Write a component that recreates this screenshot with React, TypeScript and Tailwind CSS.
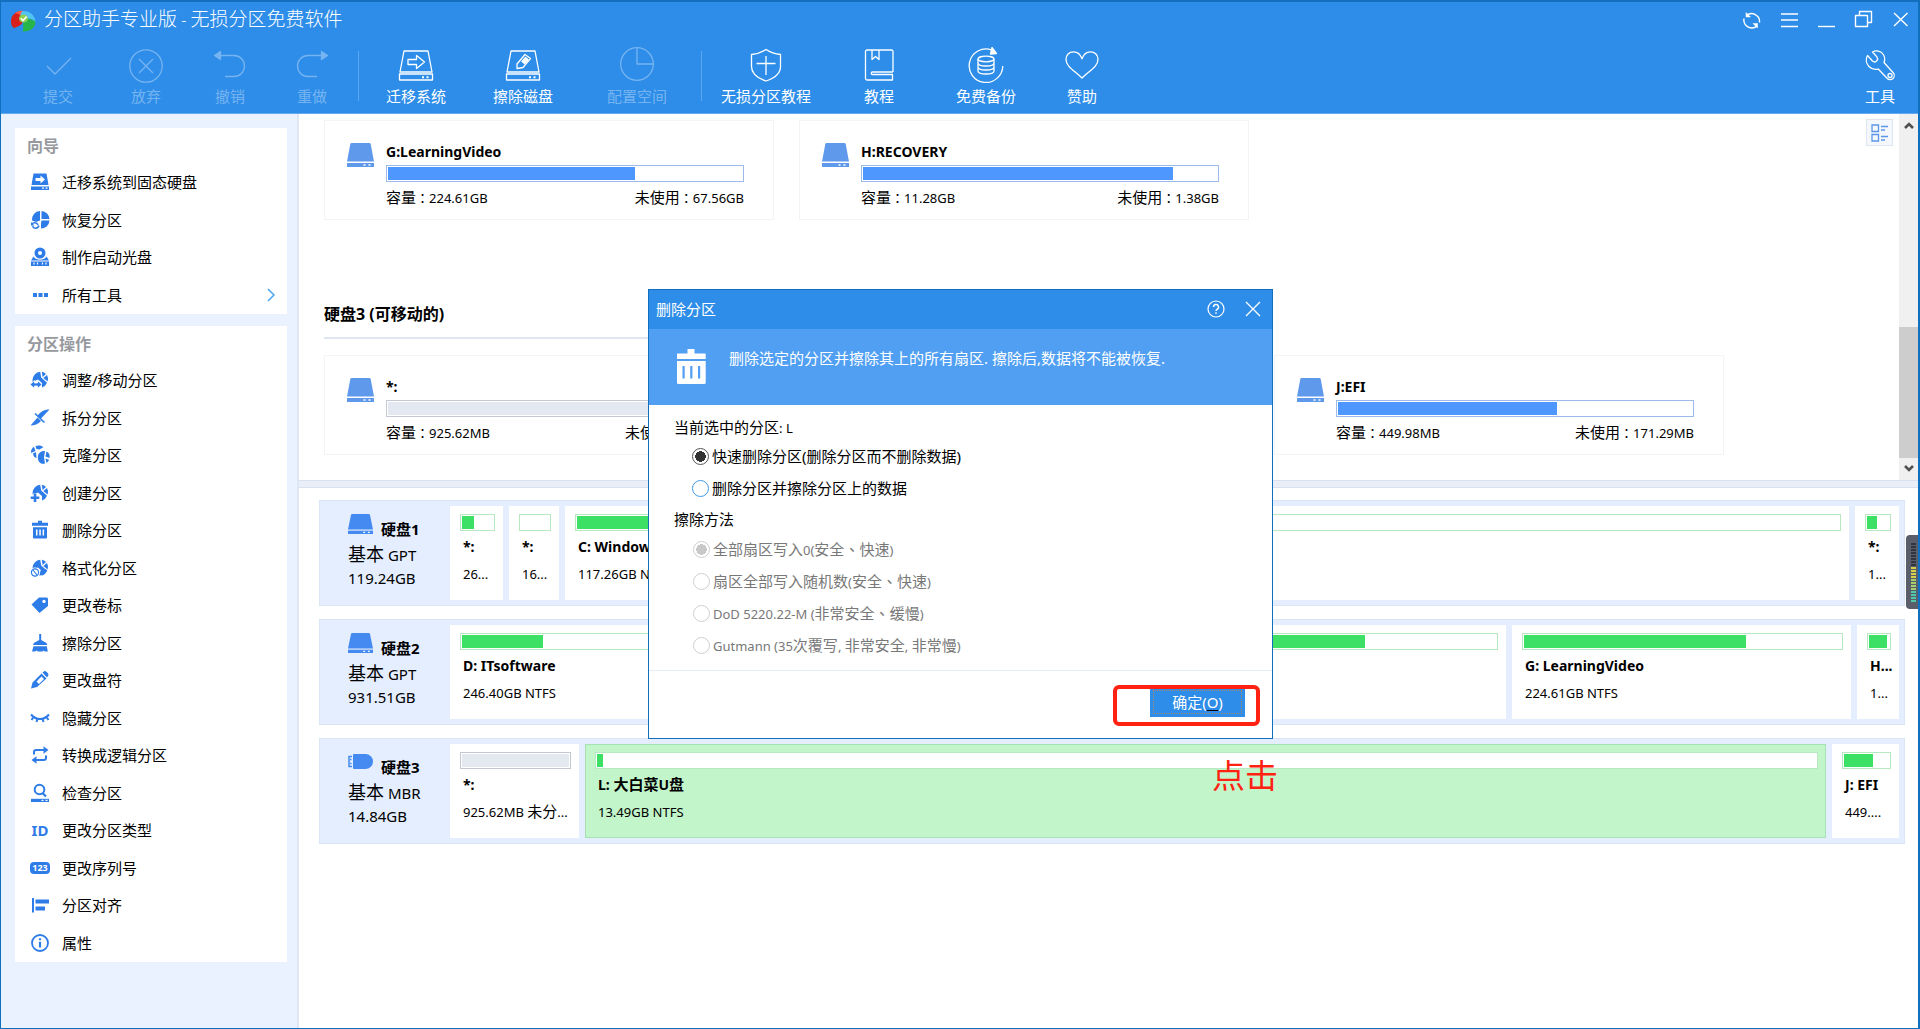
import React from "react";

const LATIN = /([\x20-\x7e…]+|[：、]+)/;

/* Chinese runs keep the parent size; Latin runs are set one step smaller. */
function Mixed({ text, latin = "text-[13px]" }: { text: string; latin?: string }) {
  return (
    <>
      {text.split(LATIN).map((part, i) => {
        if (!part) return null;
        if (/^[：、]/.test(part))
          return (
            <span key={i} className={`font-['Noto_Sans_CJK_TC',sans-serif] ${part === "、" ? "text-[15px]" : "text-[13px]"}`}>
              {part}
            </span>
          );
        if (LATIN.test(part))
          return (
            <span key={i} className={latin}>
              {part}
            </span>
          );
        return <React.Fragment key={i}>{part}</React.Fragment>;
      })}
    </>
  );
}

function Line({ children, size = 36, w = 1.3 }: { children: React.ReactNode; size?: number; w?: number }) {
  return (
    <svg
      width={size}
      height={size}
      viewBox={`0 0 ${size} ${size}`}
      fill="none"
      stroke="currentColor"
      strokeWidth={w}
      strokeLinejoin="round"
      aria-hidden="true"
    >
      {children}
    </svg>
  );
}

/* ---------- toolbar ---------- */

const toolIcons: Record<string, React.ReactNode> = {
  commit: <path d="M7 19l8 8L31 11" />,
  discard: (
    <>
      <circle cx="18" cy="19" r="16.2" />
      <path d="M11 12l14 14M25 12L11 26" />
    </>
  ),
  undo: (
    <>
      <path d="M8 8.500h14a10.500 10.500 0 0 1 0 21h-9" />
      <path d="M2.500 8.500l6-4v8z" fill="currentColor" />
    </>
  ),
  redo: (
    <>
      <path d="M28 8.500H14a10.500 10.500 0 0 0 0 21h9" />
      <path d="M33.500 8.500l-6-4v8z" fill="currentColor" />
    </>
  ),
  migrate: (
    <>
      <path d="M6 4h24l4 21H2z" />
      <path d="M1.500 27h33v6h-33z" />
      <path d="M24 30.200h2M28.500 30.200h2" strokeWidth="2" />
      <path d="M10 12.500h8.500V8.500l8 6.500-8 6.500v-4H10z" />
    </>
  ),
  wipe: (
    <>
      <path d="M6 4h24l4 21H2z" />
      <path d="M1.500 27h33v6h-33z" />
      <path d="M24 30.200h2M28.500 30.200h2" strokeWidth="2" />
      <path d="M12 17l8-9.500 5.500 4-7.500 9-6 1z" />
      <path d="M17 14.500l3.500-4 2.500 2-3.500 4z" fill="currentColor" />
    </>
  ),
  space: (
    <>
      <circle cx="18" cy="17" r="16.300" />
      <path d="M18 1v16h16" />
    </>
  ),
  shield: (
    <>
      <path d="M18 2.500c4.500 3 9 4.500 14.500 5v12c0 7-7 12-14.500 14.500C10.500 31.500 3.500 26.500 3.500 19.500v-12C9 7 13.500 5.500 18 2.500z" />
      <path d="M18 9v19M8.500 16.500h19" />
    </>
  ),
  book: (
    <>
      <path d="M32 25H11.500M32 25V4.500a1.500 1.500 0 0 0-1.500-1.500H6a1.500 1.500 0 0 0-1.500 1.500v27A1.500 1.500 0 0 0 6 33h25.500v-5.500H11.500a1.200 1.200 0 0 1 0-2.500" />
      <path d="M11 3v9.500l3.500-3 3.500 3V3" />
    </>
  ),
  backup: (
    <>
      <path d="M23.500 2.800A16.800 16.800 0 1 0 34.800 19" />
      <path d="M24 0.500l4.500 6-6 .500z" fill="currentColor" />
      <ellipse cx="18" cy="12" rx="8" ry="2.800" />
      <path d="M10 12v12c0 4 16 4 16 0V12M10 16c0 4 16 4 16 0M10 20c0 4 16 4 16 0" />
    </>
  ),
  heart: (
    <path d="M18 31C12 24.500 2 20 2 12.500 2 8 5 4.800 9.500 4.800c4 0 7 2.500 8.500 7 1.500-4.500 4.500-7 8.500-7C31 4.800 34 8 34 12.500 34 20 24 24.500 18 31z" />
  ),
  wrench: (
    <>
      <path d="M10.500 5c3.500-2 8.500-1 10.800 2.500 1.800 2.700 1.700 5.500.700 8l9.200 10.200c1.500 1.700 1.300 4.300-.200 5.800s-4.200 1.600-5.700 0L16.200 22c-3.200 1-6.800 0-9.200-2.500-3-3-3.500-7.500-1.500-11l5 5.500c1.500 1.200 3.300 1 4.300-.200s1-2.800 0-4z" />
      <circle cx="28" cy="28.500" r="2" />
    </>
  ),
};

type Tool = { icon: string; label: string; width: string; off?: boolean };
const toolGroups: Tool[][] = [
  [
    { icon: "commit", label: "提交", width: "w-[88px]", off: true },
    { icon: "discard", label: "放弃", width: "w-[88px]", off: true },
    { icon: "undo", label: "撤销", width: "w-20", off: true },
    { icon: "redo", label: "重做", width: "w-[84px]", off: true },
  ],
  [
    { icon: "migrate", label: "迁移系统", width: "w-[106px]" },
    { icon: "wipe", label: "擦除磁盘", width: "w-[108px]" },
    { icon: "space", label: "配置空间", width: "w-[120px]", off: true },
  ],
  [
    { icon: "shield", label: "无损分区教程", width: "w-[120px]" },
    { icon: "book", label: "教程", width: "w-[106px]" },
    { icon: "backup", label: "免费备份", width: "w-[108px]" },
    { icon: "heart", label: "赞助", width: "w-[84px]" },
  ],
];

function ToolButton({ icon, label, width, off }: Tool) {
  return (
    <button
      type="button"
      disabled={off}
      className={`flex flex-col items-center gap-[3px] text-[15px] leading-5 whitespace-nowrap ${width} ${
        off ? "text-[#76b4f1]" : "text-white"
      }`}
    >
      <Line>{toolIcons[icon]}</Line>
      {label}
    </button>
  );
}

function Header() {
  return (
    <header className="h-[114px] shrink-0 border-t-2 border-b border-t-[#1470bf] border-b-[#62abf0] bg-[#2d8de8] text-white">
      <div className="flex h-9 items-start">
        <svg width="26" height="22" viewBox="0 0 26 22" className="mt-2 ml-[9px] shrink-0" aria-hidden="true">
          <path d="M13 1C5 1 1 5.500 1 11c0 3.500 1 6 3 7 3-1 6-2 8.500-5L9 8z" fill="#d9211c" />
          <path d="M13 1c-3-.500-6 .500-8 2.500C8 3 10 4.500 12 7z" fill="#ff5a45" />
          <path d="M13 1c7 0 12 4 12.500 11-3-3-6-4-9.500-3.500L10.500 6C10.500 3.500 11 2 13 1z" fill="#52c3f5" />
          <path d="M25.500 12c-.500 6-5.500 10-13 9.500 1-2.500 1-5 .500-7.500l3.500-5c4-.500 7 .500 9 3z" fill="#27b54a" />
          <ellipse cx="13.500" cy="8.500" rx="4.500" ry="4" fill="#8ed14f" />
          <path d="M10.800 8.300l2.200 2.200 3.600-4" stroke="#fff" strokeWidth="1.600" fill="none" />
        </svg>
        <h1 className="ml-2 flex-1 text-[19px] leading-[34px] font-light">
          <Mixed text="分区助手专业版 - 无损分区免费软件" latin="text-base" />
        </h1>
        <div className="flex">
          {[
            [
              "刷新",
              <>
                <path d="M17.500 13.500a8 8 0 0 0-13-7M2 9.500a8 8 0 0 0 13 7.500" transform="translate(0 -1)" />
                <path d="M4 2.500v4.500h4.500zM15.500 18v-4.500H11z" fill="currentColor" strokeWidth="0.500" />
              </>,
            ],
            ["菜单", <path d="M2 4h17M2 10h17M2 16.500h17" />],
            ["最小化", <path d="M2 16.500h17" />],
            ["还原", <path d="M2.500 5.500h12v11h-12zM6.500 5.500v-4h12v11h-4" />],
            ["关闭", <path d="M4 3l13.500 13M17.500 3L4 16" />],
          ].map(([name, icon]) => (
            <button key={name as string} type="button" aria-label={name as string} className="flex h-9 w-[37px] justify-center pt-2">
              <Line size={20} w={1.4}>
                {icon}
              </Line>
            </button>
          ))}
        </div>
      </div>
      <div className="flex items-start pt-[9px] pl-[13px]">
        {toolGroups.map((group, g) => (
          <React.Fragment key={g}>
            {g > 0 && <span className="mx-1 mt-1 h-[50px] w-px bg-[#5ca8ee]" />}
            {group.map((t) => (
              <ToolButton key={t.label} {...t} />
            ))}
          </React.Fragment>
        ))}
        <span className="flex-1" />
        <ToolButton icon="wrench" label="工具" width="w-[76px]" />
      </div>
    </header>
  );
}

/* ---------- sidebar ---------- */

const globe = (
  <>
    <path d="M2.500 10A8.300 8.300 0 0 1 10.200 1.800l1 5.700 5.800 5.200A8.300 8.300 0 0 1 12 17.500V13L8 9.500 2.500 12z" fill="currentColor" />
    <path d="M11.800 1.800a8.300 8.300 0 0 1 4.200 2.100l-3.400 3z" fill="currentColor" />
    <path d="M17 5a8 8 0 0 1 .700 6.500L13.300 8z" fill="currentColor" />
  </>
);

const sideIcons: Record<string, React.ReactNode> = {
  migrate: (
    <>
      <path d="M3.500 1.500h13l2 11.500h-17z" fill="currentColor" />
      <path d="M1 14.500h18v3.500H1z" fill="currentColor" />
      <path d="M5.500 6h5V3.500l4.500 4-4.500 4V9h-5z" fill="#fff" />
      <path d="M12 16.200h2M15.500 16.200h2" stroke="#fff" strokeWidth="1.300" />
    </>
  ),
  recover: (
    <>
      <path d="M10 1v9.500l-4 1.500-4-1.500A8.500 8.500 0 0 1 10 1z" fill="currentColor" />
      <path d="M11.500 1A8.500 8.500 0 0 1 19.500 9h-8z" fill="currentColor" />
      <path d="M11.500 10.500h8a8.500 8.500 0 0 1-8.500 8v-5z" fill="currentColor" />
      <path d="M1.500 14.500c1.500-2.500 5.500-2.500 6.500.500M9 15.500c-1 3.500-5.500 3.500-6.500.800" stroke="currentColor" strokeWidth="1.600" fill="none" />
      <path d="M1 12v3.500h3.500z" fill="currentColor" />
    </>
  ),
  bootdisc: (
    <>
      <path d="M10 0.500a5.500 5.500 0 1 1 0 11 5.500 5.500 0 0 1 0-11zm0 3.500a2 2 0 1 0 0 4 2 2 0 0 0 0-4z" fill="currentColor" fillRule="evenodd" />
      <path d="M3.500 9.500c2.500 4.300 10.500 4.300 13 0l2.500 4H1z" fill="currentColor" />
      <path d="M1 14.500h18V19H1z" fill="currentColor" />
      <path d="M4 15.500v2M7.500 15.500v2M12.500 15.500v2M16 15.500v2" stroke="#fff" strokeWidth="1.200" />
    </>
  ),
  dots: <path d="M3 8h4v4H3zM8.500 8h4v4h-4zM14 8h4v4h-4z" fill="currentColor" />,
  resize: (
    <>
      {globe}
      <path d="M0 14.500l4.500-4v2.500h3v-2.500l4.500 4-4.500 4V16h-3v2.500z" fill="currentColor" stroke="#fff" strokeWidth="0.800" />
    </>
  ),
  split: (
    <>
      <path d="M19.500 1.500l-9 9.500-3-3C10 4 14 1.500 19.500 1.500zM7.500 9.500l3.500 3.500C8.500 16 4 17.500.500 17.500z" fill="currentColor" />
      <path d="M5 5.500l9.500 9" stroke="currentColor" strokeWidth="1.600" />
    </>
  ),
  clone: (
    <>
      <path d="M1 7c0-2 1-4 3-5.200L5.500 6 1.200 8zM5.500 1c3-1 6-.500 8 1l-4 2.500-3-.500zM3 8.500l3-1.500.500 6C4.500 12.500 3.200 11 3 8.500z" fill="currentColor" />
      <path d="M8 10.500C9 7 12 5.500 15 6l-1 6.500 1 6C10.500 20 7 16 8 10.500zM16.500 6.500c2.500 1 3.500 3.500 3 6.500l-4-1.500zM15.500 13.500l3.500 1.300c-.500 1.500-1.500 2.500-2.500 3.200z" fill="currentColor" />
    </>
  ),
  create: (
    <>
      {globe}
      <path d="M5 10.500v8.500M.700 14.800h8.600" stroke="#fff" strokeWidth="5" />
      <path d="M5 10.500v8.500M.700 14.800h8.600" stroke="currentColor" strokeWidth="2.600" />
    </>
  ),
  trash: (
    <path
      d="M8 0.800h4v2h6v3H2v-3h6zM3 7.200h14V17.500a1 1 0 0 1-1 1H4a1 1 0 0 1-1-1zM6 9.500v6h1.500v-6zM9.300 9.500v6h1.500v-6zM12.600 9.500v6h1.500v-6z"
      fill="currentColor"
      fillRule="evenodd"
    />
  ),
  format: (
    <>
      <path d="M11.500 10l-2.500 7.500a8.500 8.500 0 0 0 8.300-5.500z" fill="currentColor" />
      {globe}
      <circle cx="5" cy="14.500" r="5" fill="#fff" />
      <circle cx="5" cy="14.500" r="3.600" fill="none" stroke="currentColor" strokeWidth="1.200" />
      <path d="M3 12l4 5" stroke="currentColor" strokeWidth="1.200" />
    </>
  ),
  tag: (
    <path
      d="M9 2.500h7.500a1.500 1.500 0 0 1 1.500 1.500v7L9.500 18 1.500 9.500zM14 4.700a1.700 1.700 0 1 0 0 3.400 1.700 1.700 0 0 0 0-3.400z"
      fill="currentColor"
      fillRule="evenodd"
    />
  ),
  brush: (
    <>
      <path d="M9.200 1h2v6l4.500 2.500c1.300.800 1.500 1.800 1.500 2.500h-14c0-1 .300-1.800 1.500-2.500L9.200 7z" fill="currentColor" />
      <path d="M3.500 13.200h13.300l1 5.300h-3l-1.300-1-1 1h-4.500l-1.500-1-1.500 1H2z" fill="currentColor" />
    </>
  ),
  pencil: (
    <path
      d="M12.500 2.500L14.500 1c1-.500 4.500 2.700 4 4l-1.500 2.500zM11.500 3.500L16.500 8.500 7 17 1 18.500 2.500 12.500zM11.500 6.500L6.500 11.500 9 14l5-5z"
      fill="currentColor"
      fillRule="evenodd"
    />
  ),
  hidden: (
    <path
      d="M1 6.500c5 6 13 6 18 0M3.500 9L1.500 12M16.500 9l2 3M7.500 10.800L6.500 14M12.500 10.800l1 3.200"
      stroke="currentColor"
      strokeWidth="2"
      fill="none"
    />
  ),
  convert: (
    <>
      <path d="M4 9.500V7.200c0-1.200 1-2.200 2.200-2.200H14M16 10.500v2.300c0 1.200-1 2.200-2.200 2.200H6" stroke="currentColor" strokeWidth="2" fill="none" />
      <path d="M13.500 1.200L18.500 5l-5 3.800zM6.500 11.200L1.500 15l5 3.800z" fill="currentColor" />
    </>
  ),
  check: (
    <>
      <circle cx="9.500" cy="6.500" r="4.800" fill="none" stroke="currentColor" strokeWidth="2" />
      <path d="M12.500 10l3.500 3.500" stroke="currentColor" strokeWidth="2.200" />
      <path d="M1 15.800h18V19H1z" fill="currentColor" />
      <path d="M11.500 17.400h2M15.500 17.400h2" stroke="#fff" strokeWidth="1.200" />
    </>
  ),
  align: <path d="M2 3h2v14.500H2zM5.500 4.500H19v4H5.500zM5.500 11.500h9.500v4H5.500z" fill="currentColor" />,
  info: (
    <>
      <circle cx="10" cy="10" r="8" fill="none" stroke="currentColor" strokeWidth="1.800" />
      <path d="M10 8.800v5.700M10 5.200v2" stroke="currentColor" strokeWidth="2.200" />
    </>
  ),
};

function SideIcon({ name }: { name: string }) {
  if (name === "id") return <span className="w-5 text-center text-[15px] leading-5 font-bold">ID</span>;
  if (name === "123")
    return (
      <span className="h-3 w-5 rounded-sm bg-[#2e7ce8] text-center text-[9px] leading-3 font-bold text-white">123</span>
    );
  return (
    <svg width="20" height="20" viewBox="0 0 20 20" aria-hidden="true">
      {sideIcons[name]}
    </svg>
  );
}

const wizard = [
  ["migrate", "迁移系统到固态硬盘"],
  ["recover", "恢复分区"],
  ["bootdisc", "制作启动光盘"],
  ["dots", "所有工具"],
];
const operations = [
  ["resize", "调整/移动分区"],
  ["split", "拆分分区"],
  ["clone", "克隆分区"],
  ["create", "创建分区"],
  ["trash", "删除分区"],
  ["format", "格式化分区"],
  ["tag", "更改卷标"],
  ["brush", "擦除分区"],
  ["pencil", "更改盘符"],
  ["hidden", "隐藏分区"],
  ["convert", "转换成逻辑分区"],
  ["check", "检查分区"],
  ["id", "更改分区类型"],
  ["123", "更改序列号"],
  ["align", "分区对齐"],
  ["info", "属性"],
];

function SidePanel({ title, items, height }: { title: string; items: string[][]; height: string }) {
  return (
    <section className="bg-white">
      <h2 className="h-9 pl-3 text-base leading-9 font-bold text-[#96999e]">{title}</h2>
      <ul className={`grid auto-rows-fr ${height}`}>
        {items.map(([icon, label]) => (
          <li key={label} className="flex">
            <button type="button" className="flex w-full items-center gap-3 pr-3 pb-px pl-[15px] text-[15px] text-black">
              <span className="flex w-5 items-center text-[#2e7ce8]">
                <SideIcon name={icon} />
              </span>
              <span className="flex-1 text-left">{label}</span>
              {icon === "dots" && (
                <svg width="8" height="14" viewBox="0 0 8 14" fill="none" stroke="#4aa3f0" strokeWidth="1.500" aria-hidden="true">
                  <path d="M1 1l6 6-6 6" />
                </svg>
              )}
            </button>
          </li>
        ))}
      </ul>
    </section>
  );
}

/* ---------- upper pane: partition cards ---------- */

function DriveIcon({ className }: { className: string }) {
  return (
    <svg viewBox="0 0 27 24" preserveAspectRatio="none" className={className} fill="currentColor" aria-hidden="true">
      <path d="M4.500 0h18c.600 0 1 .400 1.200 1L27 18.500H0L3.300 1c.200-.600.600-1 1.200-1z" />
      <path d="M0 20h27v4H0z" />
      <path d="M16.500 22h2M21.500 22h2" stroke="#fff" strokeWidth="1.400" />
    </svg>
  );
}

type Card = { name: string; total: string; free: string; used: number; unallocated?: boolean };

function PartitionCard({ name, total, free, used, unallocated }: Card) {
  return (
    <article className="flex h-[100px] w-[450px] gap-3 border border-[#f2f4f8] pt-5 pr-[29px] pl-[22px]">
      <DriveIcon className="mt-0.5 h-6 w-[27px] text-[#5f99eb]" />
      <div className="flex-1 text-black">
        <h3 className="h-6 text-[15px] leading-5 font-bold">
          <Mixed text={name} latin="text-[14px]" />
        </h3>
        <div className={`h-[17px] border p-px ${unallocated ? "border-[#c5c9d3]" : "border-[#9dbbe8]"}`}>
          <div className={`h-full ${unallocated ? "bg-[#e4e8f1]" : "bg-[#4d97ff]"}`} style={{ width: `${used}%` }} />
        </div>
        <p className="flex justify-between pt-[5px] text-[15px] leading-5">
          <span>
            <Mixed text={`容量：${total}`} />
          </span>
          <span>
            <Mixed text={`未使用：${free}`} />
          </span>
        </p>
      </div>
    </article>
  );
}

const upperCards: Card[] = [
  { name: "G:LearningVideo", total: "224.61GB", free: "67.56GB", used: 69.8 },
  { name: "H:RECOVERY", total: "11.28GB", free: "1.38GB", used: 87.5 },
];
const removableCards: Card[] = [
  { name: "*:", total: "925.62MB", free: "925.62MB", used: 100, unallocated: true },
  { name: "L:大白菜U盘", total: "13.49GB", free: "13.42GB", used: 1 },
  { name: "J:EFI", total: "449.98MB", free: "171.29MB", used: 61.8 },
];

function Overview() {
  return (
    <section className="flex h-[366px] shrink-0">
      <div className="flex-1 pt-1.5 pl-[25px]">
        <div className="flex gap-[25px]">
          {upperCards.map((c) => (
            <PartitionCard key={c.name} {...c} />
          ))}
        </div>
        <h2 className="mt-[82px] w-[450px] border-b-2 border-[#e0e6f0] pb-[11px] text-base leading-6 font-bold text-black">
          <Mixed text="硬盘3 (可移动的)" latin="text-base" />
        </h2>
        <div className="mt-4 flex gap-[25px]">
          {removableCards.map((c) => (
            <PartitionCard key={c.name} {...c} />
          ))}
        </div>
      </div>
      <button
        type="button"
        aria-label="视图"
        className="mt-[5px] mr-[6px] flex h-[27px] w-[27px] items-center justify-center border border-[#e0e6f0] bg-[#f4f7fc]"
      >
        <svg width="17" height="18" viewBox="0 0 17 18" fill="none" stroke="#5b96ea" strokeWidth="1.300" aria-hidden="true">
          <path d="M1 1h6.500v6.500H1zM1 10.500h6.500V17H1zM10 2.500h7M10 6h4M10 12.500h7M10 16h4" />
        </svg>
      </button>
      <div className="flex w-[19px] flex-col items-center bg-[#f0f0f0] py-2" aria-hidden="true">
        <svg width="10" height="7" viewBox="0 0 10 7" fill="none" stroke="#505050" strokeWidth="2.600">
          <path d="M1 6l4-4 4 4" />
        </svg>
        <div className="mt-auto mb-[7px] h-[131px] w-full bg-[#cdcdcd]" />
        <svg width="10" height="7" viewBox="0 0 10 7" fill="none" stroke="#505050" strokeWidth="2.600">
          <path d="M1 1l4 4 4-4" />
        </svg>
      </div>
    </section>
  );
}

/* ---------- lower pane: disk map ---------- */

type Part = {
  name: string;
  info: string;
  used: number;
  width?: string;
  grow?: number;
  kind?: "free" | "selected";
};
type Disk = { name: string; scheme: string; size: string; usb?: boolean; parts: Part[] };

const disks: Disk[] = [
  {
    name: "硬盘1",
    scheme: "基本 GPT",
    size: "119.24GB",
    parts: [
      { name: "*:", info: "26...", used: 40, width: "w-[53px]" },
      { name: "*:", info: "16...", used: 0, width: "w-[50px]" },
      { name: "C: Windows", info: "117.26GB NTFS", used: 50, grow: 1 },
      { name: "*:", info: "1...", used: 45, width: "w-[44px]" },
    ],
  },
  {
    name: "硬盘2",
    scheme: "基本 GPT",
    size: "931.51GB",
    parts: [
      { name: "D: ITsoftware", info: "246.40GB NTFS", used: 23, grow: 354 },
      { name: "E:", info: "449.22GB NTFS", used: 80, grow: 660 },
      { name: "G: LearningVideo", info: "224.61GB NTFS", used: 70, grow: 321 },
      { name: "H...", info: "1...", used: 88, width: "w-[42px]" },
    ],
  },
  {
    name: "硬盘3",
    scheme: "基本 MBR",
    size: "14.84GB",
    usb: true,
    parts: [
      { name: "*:", info: "925.62MB 未分...", used: 100, width: "w-[129px]", kind: "free" },
      { name: "L: 大白菜U盘", info: "13.49GB NTFS", used: 0.5, grow: 1, kind: "selected" },
      { name: "J: EFI", info: "449....", used: 64, width: "w-[67px]" },
    ],
  },
];

function PartitionBox({ part }: { part: Part }) {
  const selected = part.kind === "selected";
  const free = part.kind === "free";
  return (
    <div
      className={`h-[94px] border pt-[7px] pr-[7px] pl-[9px] ${part.width ? `${part.width} shrink-0` : "min-w-0 basis-0"} ${
        selected ? "border-[#a6e1b2] bg-[#c2f5c9]" : "border-white bg-white"
      }`}
      style={part.grow ? { flexGrow: part.grow } : undefined}
    >
      <div className={`h-[17px] border bg-white p-px ${free ? "border-[#c3c7cf]" : "border-[#b7e8c2]"}`}>
        <div className={`h-full ${free ? "bg-[#e4e8ef]" : "bg-[#3be065]"} ${part.used > 0 ? "min-w-1.5" : ""}`} style={{ width: `${part.used}%` }} />
      </div>
      <div className="pl-[3px] whitespace-nowrap text-black">
        <p className="mt-0.5 text-[15px] leading-[26px] font-bold">
          <Mixed text={part.name} latin="text-[14px]" />
        </p>
        <p className="text-[15px] leading-[26px]">
          <Mixed text={part.info} />
        </p>
      </div>
    </div>
  );
}

function DiskRow({ disk }: { disk: Disk }) {
  return (
    <section className="flex h-[106px] gap-1.5 border border-[#dae5f6] bg-[#e4eeff] py-[5px] pr-[5px]">
      <div className="w-[124px] shrink-0 pt-2 pl-7 text-black">
        <h3 className="flex h-[27px] items-start gap-2">
          {disk.usb ? (
            <svg width="25" height="15" viewBox="0 0 25 15" className="mt-0.5 text-[#458af0]" aria-hidden="true">
              <path d="M6 0h11.500a7.500 7.500 0 0 1 0 15H6a1 1 0 0 1-1-1V1a1 1 0 0 1 1-1z" fill="currentColor" />
              <path d="M4 2.500H1v10h3" fill="none" stroke="currentColor" strokeWidth="1.500" />
              <path d="M2 5.500h1.500M2 9.500h1.500" stroke="currentColor" strokeWidth="1.500" />
            </svg>
          ) : (
            <DriveIcon className="h-5 w-[25px] text-[#458af0]" />
          )}
          <span className="pt-[3px] text-[15px] leading-6 font-bold">
            <Mixed text={disk.name} latin="text-[15px]" />
          </span>
        </h3>
        <p className="text-[18px] leading-[26px]">
          <Mixed text={disk.scheme} latin="text-[15px]" />
        </p>
        <p className="text-[15px] leading-[21px]">{disk.size}</p>
      </div>
      {disk.parts.map((p, i) => (
        <PartitionBox key={i} part={p} />
      ))}
    </section>
  );
}

/* ---------- dialog ---------- */

function Choice({ name, label, checked, off }: { name: string; label: string; checked?: boolean; off?: boolean }) {
  return (
    <label className={`flex h-8 items-center gap-[3px] ${off ? "pl-px text-[#787878]" : "text-black"}`}>
      <input
        type="radio"
        name={name}
        defaultChecked={checked}
        disabled={off}
        className={`h-[17px] w-[17px] appearance-none rounded-full border bg-white checked:bg-radial checked:from-50% checked:to-50% ${
          off
            ? "border-[#cfcfcf] checked:from-[#c8c8c8] checked:to-white"
            : "border-[#3f98e8] checked:border-[#555] checked:from-[#333] checked:to-white"
        }`}
      />
      <span>
        <Mixed text={label} latin={off ? "text-[13px]" : "text-[15px]"} />
      </span>
    </label>
  );
}

function DeleteDialog() {
  return (
    <div className="pointer-events-none absolute inset-0 flex items-center justify-center pl-0.5">
      <div
        role="dialog"
        aria-labelledby="dialog-title"
        className="pointer-events-auto relative flex h-[450px] w-[625px] flex-col border border-[#1170bd] bg-white text-[15px]"
      >
        <div className="flex h-[39px] items-center bg-[#2d8de8] pr-[11px] pb-0.5 pl-[7px] text-white">
          <h2 id="dialog-title" className="flex-1 pt-0.5">
            删除分区
          </h2>
          <button type="button" aria-label="帮助" className="mr-5">
            <svg width="18" height="18" viewBox="0 0 18 18" fill="none" stroke="currentColor" strokeWidth="1.200" aria-hidden="true">
              <circle cx="9" cy="9" r="8" />
              <path d="M6.500 7a2.500 2.500 0 1 1 3.600 2.300c-.800.400-1.100.800-1.100 1.700M9 12.300v1.500" strokeWidth="1.500" />
            </svg>
          </button>
          <button type="button" aria-label="关闭">
            <svg width="16" height="16" viewBox="0 0 16 16" fill="none" stroke="currentColor" strokeWidth="1.300" aria-hidden="true">
              <path d="M1 1l14 14M15 1L1 15" />
            </svg>
          </button>
        </div>
        <div className="flex h-[76px] gap-[23px] bg-[#519ff3] pl-7 text-white">
          <svg width="29" height="35" viewBox="0 0 29 35" className="mt-5" fill="currentColor" aria-hidden="true">
            <path d="M10.500 0h7v4.500H28a.700.700 0 0 1 .700.700V10H0V5.200a.700.700 0 0 1 .700-.700h9.800z" />
            <path
              d="M0 12h28.700v21.500a1.500 1.500 0 0 1-1.500 1.500H1.500A1.500 1.500 0 0 1 0 33.500zM5.500 17v12.500h2.200V17zM13.200 17v12.500h2.200V17zM21 17v12.500h2.200V17z"
              fillRule="evenodd"
            />
          </svg>
          <p className="pt-[17px] leading-6">
            <Mixed text="删除选定的分区并擦除其上的所有扇区. 擦除后,数据将不能被恢复." latin="text-[15px]" />
          </p>
        </div>
        <div className="pt-2.5 pl-[25px]">
          <p className="h-[25px] leading-6 text-black">
            <Mixed text="当前选中的分区: L" />
          </p>
          <div className="pl-[18px]">
            <Choice name="delete-mode" label="快速删除分区(删除分区而不删除数据)" checked />
            <Choice name="delete-mode" label="删除分区并擦除分区上的数据" />
          </div>
          <p className="h-[29px] leading-[30px] text-black">擦除方法</p>
          <div className="pl-[18px]">
            <Choice name="wipe-method" label="全部扇区写入0(安全、快速)" checked off />
            <Choice name="wipe-method" label="扇区全部写入随机数(安全、快速)" off />
            <Choice name="wipe-method" label="DoD 5220.22-M (非常安全、缓慢)" off />
            <Choice name="wipe-method" label="Gutmann (35次覆写, 非常安全, 非常慢)" off />
          </div>
        </div>
        <div className="mt-auto flex h-[68px] items-start justify-end border-t border-[#e6edf6] pt-4 pr-[27px]">
          <button type="button" className="h-[30px] w-[95px] bg-[#2d8de8] p-[3px] text-white">
            <span className="flex h-full items-center justify-center border border-dotted border-[#a58a6a]">
              确定(<u className="decoration-black underline-offset-2">O</u>)
            </span>
          </button>
        </div>
        <div className="absolute right-3 bottom-3 h-[41px] w-[147px] rounded-md border-4 border-[#ff2112]" />
        <p className="absolute -right-1.5 -bottom-[58px] text-[33px] leading-10 text-[#ff2112]">点击</p>
      </div>
    </div>
  );
}

/* ---------- side meter ---------- */

const meter = Array.from({ length: 20 }, (_, i) => (i < 8 ? "#33363f" : i < 12 ? "#d6cf4a" : i < 16 ? "#a5cf6e" : "#4fc9a8"));

function Meter() {
  return (
    <div className="absolute top-[535px] right-0 flex h-[74px] w-3 flex-col justify-center gap-px rounded-l bg-[#5a5d6a] pr-0.5 pl-[5px]">
      {meter.map((color, i) => (
        <span key={i} className="h-0.5 w-full" style={{ backgroundColor: color }} />
      ))}
    </div>
  );
}

export default function App() {
  return (
    <div className="relative flex min-h-screen flex-col overflow-hidden border-r-2 border-b border-l border-[#1170bd] bg-white font-['Noto_Sans','Noto_Sans_CJK_SC',sans-serif]">
      <Header />
      <div className="flex flex-1">
        <nav className="flex w-[298px] shrink-0 flex-col gap-3 border-r-2 border-[#e0e7f4] bg-[#eaf2ff] pt-3.5 pr-2.5 pl-3.5">
          <SidePanel title="向导" items={wizard} height="h-[150px]" />
          <SidePanel title="分区操作" items={operations} height="h-[600px]" />
        </nav>
        <main className="flex min-w-0 flex-1 flex-col">
          <Overview />
          <div className="h-2 shrink-0 border-y border-[#d9e1ee] bg-[#e9eef7]" />
          <div className="flex flex-col gap-[13px] pt-3 pr-[13px] pl-5">
            {disks.map((d) => (
              <DiskRow key={d.name} disk={d} />
            ))}
          </div>
        </main>
      </div>
      <DeleteDialog />
      <Meter />
    </div>
  );
}
